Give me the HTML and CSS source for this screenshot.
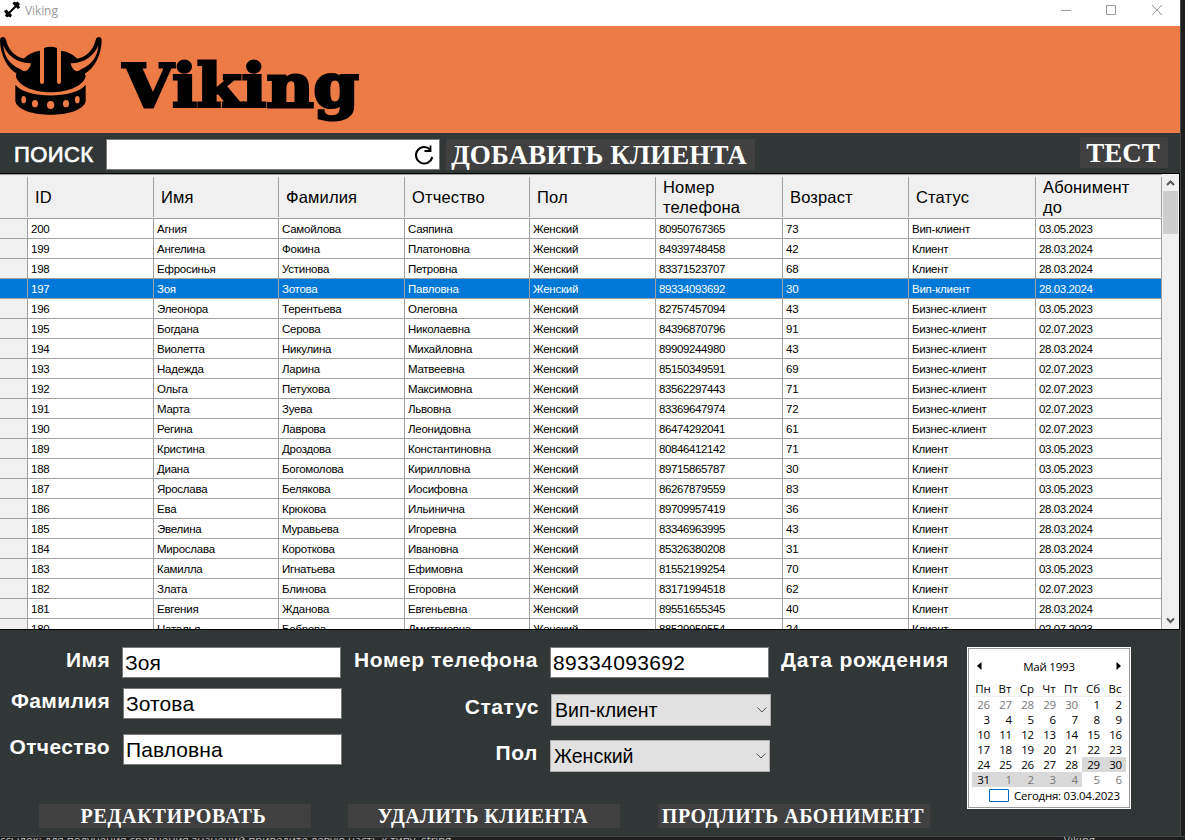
FILE: index.html
```html
<!DOCTYPE html>
<html lang="ru">
<head>
<meta charset="utf-8">
<title>Viking</title>
<link rel="stylesheet" href="styles.css">
</head>
<body>
<div class="desktop">
<main class="window">
  <header class="titlebar">
    <svg class="app-icon" width="17" height="17" viewBox="0 0 17 17"><path d="M5 12L12 5" stroke="#000" stroke-width="2"/><path d="M0 10l2.500-1.500 5.500 5.500-1.500 2.500-2-1-1.500 1-2-2 1-1.500zM8.500 2.500l1.500-2 2 1 1.500-1 2.500 2.500-1 1.500 1 2-2 1.500z"/></svg>
    <span class="title">Viking</span>
    <svg class="controls" width="110" height="20" viewBox="0 0 110 20" fill="none" stroke="#999"><path d="M1 10.500h10M46.500 5.500h9v9h-9zM92 5l10 10M102 5l-10 10"/></svg>
  </header>
  <section class="banner">
    <svg class="helmet" width="104" height="84" viewBox="0 99 312 252">
      <path d="M48 230C52 190 78 157 120 152V246a6 6 0 0 0 12 0V144Q152 137 171 144V246a6 6 0 0 0 12 0V152C225 157 251 190 257 230C235 292 70 292 48 230Z"/>
      <path d="M46 254C78 297 225 297 257 254V304C245 358 58 358 46 304Z"/>
      <path d="M0 120C0 109 15 107 18 120C26 158 60 181 88 176C108 193 92 218 75 219L52 222C22 205 0 165 0 120Z"/>
      <path d="M305 120C305 109 290 107 287 120C279 158 245 181 217 176C197 193 213 218 230 219L253 222C283 205 305 165 305 120Z"/>
      <g class="rivets"><path d="M10 136C12 170 30 195 62 208Q67 214 76 214Q90 208 93 190C50 190 22 166 10 136ZM295 136C293 170 275 195 243 208Q238 214 229 214Q215 208 212 190C255 190 283 166 295 136Z"/><ellipse cx="71" cy="299" rx="7" ry="11"/><ellipse cx="105" cy="311" rx="9" ry="11"/><ellipse cx="152" cy="315" rx="11" ry="12"/><ellipse cx="198" cy="311" rx="9" ry="11"/><ellipse cx="232" cy="299" rx="7" ry="11"/></g>
    </svg>
    <svg class="wordmark" width="250" height="80" viewBox="0 0 250 80"><text x="6" y="57.500" textLength="236" lengthAdjust="spacingAndGlyphs">Viking</text></svg>
  </section>
  <nav class="toolbar">
    <span class="search-label">ПОИСК</span>
    <div class="search"><svg width="22" height="22" viewBox="0 0 22 22" fill="none" stroke="#000" stroke-width="2"><path d="M16 5.500A8.200 8.200 0 1 0 18.200 13"/><path d="M16.500 1.500V7h-6" stroke-width="1.800"/></svg></div>
    <button class="btn add"><span>ДОБАВИТЬ КЛИЕНТА</span></button>
    <button class="btn test"><span>ТЕСТ</span></button>
  </nav>
  <section class="grid-frame">
    <table class="clients">
      <colgroup><col class="c0"><col class="c1"><col class="c2"><col class="c1"><col class="c2"><col class="c1"><col class="c3"><col class="c1"><col class="c3"><col class="c1"></colgroup>
      <thead><tr><th></th><th>ID</th><th>Имя</th><th>Фамилия</th><th>Отчество</th><th>Пол</th><th>Номер<br>телефона</th><th>Возраст</th><th>Статус</th><th>Абонимент<br>до</th></tr></thead>
      <tbody>
      <tr><td></td><td>200</td><td>Агния</td><td>Самойлова</td><td>Саяпина</td><td>Женский</td><td>80950767365</td><td>73</td><td>Вип-клиент</td><td>03.05.2023</td></tr>
      <tr><td></td><td>199</td><td>Ангелина</td><td>Фокина</td><td>Платоновна</td><td>Женский</td><td>84939748458</td><td>42</td><td>Клиент</td><td>28.03.2024</td></tr>
      <tr><td></td><td>198</td><td>Ефросинья</td><td>Устинова</td><td>Петровна</td><td>Женский</td><td>83371523707</td><td>68</td><td>Клиент</td><td>28.03.2024</td></tr>
      <tr class="selected"><td></td><td>197</td><td>Зоя</td><td>Зотова</td><td>Павловна</td><td>Женский</td><td>89334093692</td><td>30</td><td>Вип-клиент</td><td>28.03.2024</td></tr>
      <tr><td></td><td>196</td><td>Элеонора</td><td>Терентьева</td><td>Олеговна</td><td>Женский</td><td>82757457094</td><td>43</td><td>Бизнес-клиент</td><td>03.05.2023</td></tr>
      <tr><td></td><td>195</td><td>Богдана</td><td>Серова</td><td>Николаевна</td><td>Женский</td><td>84396870796</td><td>91</td><td>Бизнес-клиент</td><td>02.07.2023</td></tr>
      <tr><td></td><td>194</td><td>Виолетта</td><td>Никулина</td><td>Михайловна</td><td>Женский</td><td>89909244980</td><td>43</td><td>Бизнес-клиент</td><td>28.03.2024</td></tr>
      <tr><td></td><td>193</td><td>Надежда</td><td>Ларина</td><td>Матвеевна</td><td>Женский</td><td>85150349591</td><td>69</td><td>Бизнес-клиент</td><td>02.07.2023</td></tr>
      <tr><td></td><td>192</td><td>Ольга</td><td>Петухова</td><td>Максимовна</td><td>Женский</td><td>83562297443</td><td>71</td><td>Бизнес-клиент</td><td>02.07.2023</td></tr>
      <tr><td></td><td>191</td><td>Марта</td><td>Зуева</td><td>Львовна</td><td>Женский</td><td>83369647974</td><td>72</td><td>Бизнес-клиент</td><td>02.07.2023</td></tr>
      <tr><td></td><td>190</td><td>Регина</td><td>Лаврова</td><td>Леонидовна</td><td>Женский</td><td>86474292041</td><td>61</td><td>Бизнес-клиент</td><td>02.07.2023</td></tr>
      <tr><td></td><td>189</td><td>Кристина</td><td>Дроздова</td><td>Константиновна</td><td>Женский</td><td>80846412142</td><td>71</td><td>Клиент</td><td>03.05.2023</td></tr>
      <tr><td></td><td>188</td><td>Диана</td><td>Богомолова</td><td>Кирилловна</td><td>Женский</td><td>89715865787</td><td>30</td><td>Клиент</td><td>03.05.2023</td></tr>
      <tr><td></td><td>187</td><td>Ярослава</td><td>Белякова</td><td>Иосифовна</td><td>Женский</td><td>86267879559</td><td>83</td><td>Клиент</td><td>03.05.2023</td></tr>
      <tr><td></td><td>186</td><td>Ева</td><td>Крюкова</td><td>Ильинична</td><td>Женский</td><td>89709957419</td><td>36</td><td>Клиент</td><td>28.03.2024</td></tr>
      <tr><td></td><td>185</td><td>Эвелина</td><td>Муравьева</td><td>Игоревна</td><td>Женский</td><td>83346963995</td><td>43</td><td>Клиент</td><td>28.03.2024</td></tr>
      <tr><td></td><td>184</td><td>Мирослава</td><td>Короткова</td><td>Ивановна</td><td>Женский</td><td>85326380208</td><td>31</td><td>Клиент</td><td>28.03.2024</td></tr>
      <tr><td></td><td>183</td><td>Камилла</td><td>Игнатьева</td><td>Ефимовна</td><td>Женский</td><td>81552199254</td><td>70</td><td>Клиент</td><td>03.05.2023</td></tr>
      <tr><td></td><td>182</td><td>Злата</td><td>Блинова</td><td>Егоровна</td><td>Женский</td><td>83171994518</td><td>62</td><td>Клиент</td><td>02.07.2023</td></tr>
      <tr><td></td><td>181</td><td>Евгения</td><td>Жданова</td><td>Евгеньевна</td><td>Женский</td><td>89551655345</td><td>40</td><td>Клиент</td><td>28.03.2024</td></tr>
      <tr><td></td><td>180</td><td>Наталья</td><td>Боброва</td><td>Дмитриевна</td><td>Женский</td><td>88529959554</td><td>24</td><td>Клиент</td><td>02.07.2023</td></tr>
      </tbody>
    </table>
    <div class="scrollbar">
      <svg width="17" height="17" viewBox="0 0 17 17" fill="none" stroke="#555" stroke-width="2"><path d="M5 11l3.500-3.500L12 11"/></svg>
      <div class="thumb"></div>
      <svg class="down" width="17" height="17" viewBox="0 0 17 17" fill="none" stroke="#555" stroke-width="2"><path d="M5 6.500L8.500 10 12 6.500"/></svg>
    </div>
  </section>
  <section class="panel">
    <div class="editor">
      <div class="fields">
        <div class="column person">
          <div class="field"><label>Имя</label><div class="input first">Зоя</div></div>
          <div class="field"><label>Фамилия</label><div class="input">Зотова</div></div>
          <div class="field"><label>Отчество</label><div class="input">Павловна</div></div>
        </div>
        <div class="column details">
          <div class="field"><label>Номер телефона</label><div class="input phone">89334093692</div></div>
          <div class="field status"><label>Статус</label><div class="select">Вип-клиент<svg width="10" height="6" viewBox="0 0 10 6" fill="none" stroke="#555"><path d="M.5.5L5 5 9.500.5"/></svg></div></div>
          <div class="field sex"><label>Пол</label><div class="select">Женский<svg width="10" height="6" viewBox="0 0 10 6" fill="none" stroke="#555"><path d="M.5.5L5 5 9.500.5"/></svg></div></div>
        </div>
        <label class="birth">Дата рождения</label>
      </div>
      <div class="actions">
        <button class="btn edit"><span>РЕДАКТИРОВАТЬ</span></button>
        <button class="btn delete"><span>УДАЛИТЬ КЛИЕНТА</span></button>
        <button class="btn extend"><span>ПРОДЛИТЬ АБОНИМЕНТ</span></button>
      </div>
    </div>
    <div class="calendar">
      <div class="month"><svg width="5" height="8" viewBox="0 0 5 8"><path d="M4.500 0v8L0 4z"/></svg><span>Май 1993</span><svg width="5" height="8" viewBox="0 0 5 8"><path d="M.5 0v8L5 4z"/></svg></div>
      <div class="weekdays"><span>Пн</span><span>Вт</span><span>Ср</span><span>Чт</span><span>Пт</span><span>Сб</span><span>Вс</span></div>
      <div class="days">
        <i>26</i><i>27</i><i>28</i><i>29</i><i>30</i><b>1</b><b>2</b>
        <b>3</b><b>4</b><b>5</b><b>6</b><b>7</b><b>8</b><b>9</b>
        <b>10</b><b>11</b><b>12</b><b>13</b><b>14</b><b>15</b><b>16</b>
        <b>17</b><b>18</b><b>19</b><b>20</b><b>21</b><b>22</b><b>23</b>
        <b>24</b><b>25</b><b>26</b><b>27</b><b>28</b><b class="on">29</b><b class="on">30</b>
        <b class="on">31</b><i class="on">1</i><i class="on">2</i><i class="on">3</i><i class="on">4</i><i>5</i><i>6</i>
      </div>
      <div class="today"><span class="today-box"></span><span>Сегодня: 03.04.2023</span></div>
    </div>
  </section>
</main>
<aside class="behind-right"><div class="accent"></div></aside>
<footer class="behind-bottom"><span>ссылок; для получения сравнения значений приведите левую часть к типу&nbsp; string</span><span class="project">Viking</span></footer>
</div>
</body>
</html>
```
FILE: styles.css
```css
* { box-sizing: border-box; }
body { margin: 0; background: #1e1e1e; font-family: "Liberation Sans", Arial, sans-serif; }
.desktop { width: 1185px; height: 840px; overflow: hidden; display: grid; grid-template: 838px 2px / 1181px 4px; }
.window { grid-area: 1 / 1; border-right: 1px solid #484b4b; background: #313636; display: flex; flex-direction: column; overflow: hidden; }
.titlebar { height: 26px; flex: none; background: #fff; display: flex; align-items: flex-start; padding: 1px 0 0 4px; }
.title { font: 12px/20px "Open Sans", sans-serif; color: #999; margin-left: 4px; letter-spacing: -.1px; }
.controls { margin: -1px 10px 0 auto; }
.app-icon { flex: none; }
.banner { height: 107px; flex: none; background: #ed7b45; display: flex; align-items: flex-start; overflow: hidden; }
.helmet { margin-top: 7px; flex: none; }
.rivets { fill: #ed7b45; }
.wordmark { margin: 23px 0 0 13px; }
.wordmark text { font: bold 59px "DejaVu Serif", serif; stroke: #000; stroke-width: 3px; }
.toolbar { height: 40px; flex: none; display: flex; align-items: flex-start; padding: 6px 12px 0 14px; }
.search-label { color: #fff; font-size: 22px; line-height: 32px; width: 92px; -webkit-text-stroke: .7px #fff; letter-spacing: .4px; }
.search { width: 334px; height: 31px; background: #fff; border: 1px solid #7a7a7a; display: flex; justify-content: flex-end; padding: 4px 3px 0; }
.btn { border: 0; padding: 0; margin: 0; background: #404040; color: #fff; font: bold 22px "Liberation Serif", "Times New Roman", serif; white-space: nowrap; }
.add { width: 309px; height: 31px; margin-left: 6px; font-size: 27px; line-height: 32px; letter-spacing: .1px; }
.add span { margin-left: -3px; }
.test { width: 88px; height: 31px; margin: -2px 0 0 auto; font-size: 27px; line-height: 32px; padding-right: 2px; }
.grid-frame { height: 457px; width: 1180px; flex: none; border: 1px solid #000; border-left: 0; background: #fff; display: flex; overflow: hidden; }
.clients { table-layout: fixed; width: 1162px; flex: none; border-collapse: separate; border-spacing: 0; height: 465px; }
.c0 { width: 28px; } .c1 { width: 126px; } .c2 { width: 125px; } .c3 { width: 127px; }
.clients th { height: 45px; padding: 1px 0 0 7px; text-align: left; font-weight: normal; font-size: 16.5px; line-height: 20px; border-bottom: 1px solid #a0a0a0; border-top: 1px solid #a0a0a0; background: linear-gradient(#a0a0a0, #a0a0a0) right 2px / 1px 40px no-repeat #f0f0f0; letter-spacing: .15px; }
.clients td { height: 20px; padding: 1px 0 0 3px; font-size: 11.5px; line-height: 18px; letter-spacing: -.25px; border-right: 1px solid #a0a0a0; border-bottom: 1px solid #a0a0a0; white-space: nowrap; }
.clients td:nth-child(7), .clients td:nth-child(10) { letter-spacing: -.4px; }
.clients td:first-child { background: #f0f0f0; }
.clients .selected td { background: #0078d7; color: #fff; }
.scrollbar { width: 17px; background: #f0f0f0; display: flex; flex-direction: column; align-items: center; }
.thumb { width: 15px; height: 43px; background: #cdcdcd; }
.down { margin-top: auto; }
.panel { height: 208px; flex: none; display: flex; }
.editor { width: 967px; display: flex; flex-direction: column; }
.fields { display: flex; height: 174px; padding-top: 17px; }
.column { display: flex; flex-direction: column; }
.person { width: 342px; }
.details { width: 430px; }
.field { display: flex; height: 31px; margin-bottom: 10px; }
.person .field:nth-child(2) { margin-bottom: 15px; }
label { color: #fff; font-weight: bold; font-size: 21px; line-height: 25px; letter-spacing: .6px; white-space: nowrap; text-align: right; }
.person label { width: 110px; margin-right: 13px; letter-spacing: .35px; }
.person .field:first-child label { margin-right: 12px; }
.input { width: 219px; height: 31px; background: #fff; border: 1px solid #7a7a7a; padding-left: 2px; font-size: 21px; line-height: 30px; letter-spacing: .1px; }
.phone { letter-spacing: .35px; }
.details label { width: 196px; margin-right: 12px; }
.details .field { margin-bottom: 16px; }
.details .status { height: 32px; margin-bottom: 14px; padding-left: 1px; }
.details .sex { height: 32px; }
.select { width: 220px; height: 32px; background: #e1e1e1; border: 1px solid #adadad; padding: 0 3px 0 3px; display: flex; align-items: center; justify-content: space-between; font-size: 19.500px; line-height: 32px; }
.birth { margin-left: 9px; letter-spacing: .8px; }
.actions { display: flex; padding-left: 39px; gap: 37px; }
.actions .btn { width: 272px; height: 24px; font-size: 20px; line-height: 24px; letter-spacing: .45px; }
.actions .edit { letter-spacing: .75px; padding-right: 3px; }
.actions .delete { padding-right: 2px; }
.actions .extend { margin-left: 1px; letter-spacing: .5px; padding-right: 2px; }
.calendar { width: 164px; height: 162px; margin-top: 17px; border: 1px solid #fff; outline: 1px solid #999; outline-offset: -2px; background: #fff; font: 11.5px "Open Sans", sans-serif; padding: 0 4px; }
.month { height: 33px; display: flex; align-items: center; justify-content: space-between; padding: 3px 5px 0 5px; font-size: 11.5px; letter-spacing: -.2px; }
.weekdays { height: 16px; display: grid; grid-template-columns: repeat(7, 22px); text-align: center; line-height: 16px; border-bottom: 1px solid #eee; }
.days { display: grid; grid-template: repeat(6, 15px) / repeat(7, 22px); text-align: right; line-height: 15px; letter-spacing: -.2px; }
.days b, .days i { font-weight: normal; font-style: normal; padding-right: 4px; }
.days i { color: #777; }
.days .on { background: #d9d9d9; }
.today { display: flex; align-items: center; gap: 5px; height: 17px; padding-left: 17px; font-size: 11.5px; letter-spacing: -.25px; white-space: nowrap; }
.today-box { width: 20px; height: 13px; border: 1px solid #0066cc; border-radius: 1px; }
.behind-right { background: #202020; }
.accent { height: 2px; margin-top: 86px; background: #007acc; }
.behind-bottom { grid-area: 1 / 1 / 3 / 3; align-self: end; height: 4px; border-top: 1px solid #464949; background: #1e1e1e; overflow: hidden; font: 11.4px/14px "Open Sans", sans-serif; color: #bbb; display: flex; white-space: pre; letter-spacing: -.04px; }
.behind-bottom span { margin-top: -4px; }
.behind-bottom .project { margin-left: auto; padding-right: 90px; }
```
